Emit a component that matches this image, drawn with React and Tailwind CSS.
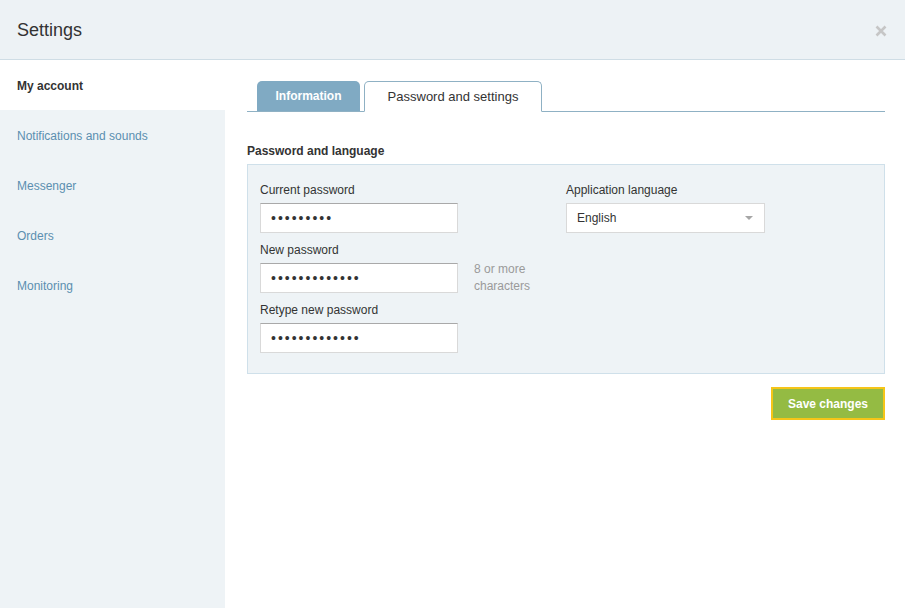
import React, { useState } from "react";

const menu = ["My account", "Notifications and sounds", "Messenger", "Orders", "Monitoring"];

const PasswordField = ({ label, value, hint }) => (
  <div>
    <div className="text-[12px] text-[#333] leading-[15px] mb-[5px]">{label}</div>
    <div className="flex items-start h-[30px]">
      <input
        type="password"
        defaultValue={value}
        className="w-[198px] h-[30px] bg-white border border-[#d9d9d9] border-t-[#a9a9a9] px-[10px] text-[14px] tracking-[2px] text-[#333] outline-none"
      />
      {hint && (
        <div className="ml-4 w-[70px] text-[12px] leading-[17px] text-[#9a9a9a] -mt-[2px]">{hint}</div>
      )}
    </div>
  </div>
);

const App = () => {
  const [active, setActive] = useState(0);
  const [tab, setTab] = useState(1);

  return (
    <div className="w-[905px] h-[608px] flex flex-col bg-white text-[#333] font-['Liberation_Sans',sans-serif] overflow-hidden">
      {/* Header */}
      <div className="h-[60px] shrink-0 flex items-center justify-between bg-[#edf2f5] border-b border-[#cfdde5] pl-[17px] pr-[18px] pt-[2px]">
        <h1 className="text-[18px] text-[#333]">Settings</h1>
        <button className="text-[#c6c6c6]">
          <svg width="12" height="12" viewBox="0 0 12 12">
            <path d="M1.5 1.5 L10.5 10.5 M10.5 1.5 L1.5 10.5" stroke="currentColor" strokeWidth="2.6" />
          </svg>
        </button>
      </div>

      <div className="flex flex-1 min-h-0">
        {/* Sidebar */}
        <div className="w-[225px] shrink-0 bg-[#eef3f6]">
          {menu.map((item, i) => (
            <div
              key={item}
              onClick={() => setActive(i)}
              className={
                "h-[50px] flex items-center pl-[17px] pt-[2px] text-[12px] cursor-pointer " +
                (active === i ? "bg-white text-[#333] font-bold" : "text-[#5b8fb0]")
              }
            >
              {item}
            </div>
          ))}
        </div>

        {/* Content */}
        <div className="flex-1 pl-[22px] pr-5 pt-[21px]">
          <div className="flex items-end gap-1 pl-[10px] border-b border-[#8fb1c4] h-[31px]">
            <button
              onClick={() => setTab(0)}
              className="h-[30px] w-[103px] rounded-t-[5px] bg-[#80aac3] text-white text-[12px] font-bold"
            >
              Information
            </button>
            <button
              onClick={() => setTab(1)}
              className="h-[31px] w-[178px] -mb-px rounded-t-[5px] bg-white border border-b-white border-[#8fb1c4] text-[13px] text-[#333]"
            >
              Password and settings
            </button>
          </div>

          <h2 className="mt-[31px] text-[12px] font-bold leading-[16px]">Password and language</h2>

          <div className="mt-[5px] h-[210px] bg-[#eef3f6] border border-[#cfe0ea] pl-3 pt-[18px] flex">
            <div className="w-[306px] flex flex-col gap-[10px]">
              <PasswordField label="Current password" value="123456789" />
              <PasswordField label="New password" value="1234567890123" hint="8 or more characters" />
              <PasswordField label="Retype new password" value="1234567890123" />
            </div>
            <div>
              <div className="text-[12px] text-[#333] leading-[15px] mb-[5px]">Application language</div>
              <div className="w-[199px] h-[30px] bg-white border border-[#d9d9d9] flex items-center justify-between pl-[10px] pr-[11px] text-[12px]">
                <span>English</span>
                <svg width="8" height="4" viewBox="0 0 8 4">
                  <path d="M0 0 H8 L4 4 Z" fill="#a6a6a6" />
                </svg>
              </div>
            </div>
          </div>

          <div className="flex justify-end mt-[13px]">
            <button className="h-[33px] w-[114px] bg-[#94bb43] border-2 border-[#f5c518] text-white text-[12px] font-bold">
              Save changes
            </button>
          </div>
        </div>
      </div>
    </div>
  );
};

export default App;
